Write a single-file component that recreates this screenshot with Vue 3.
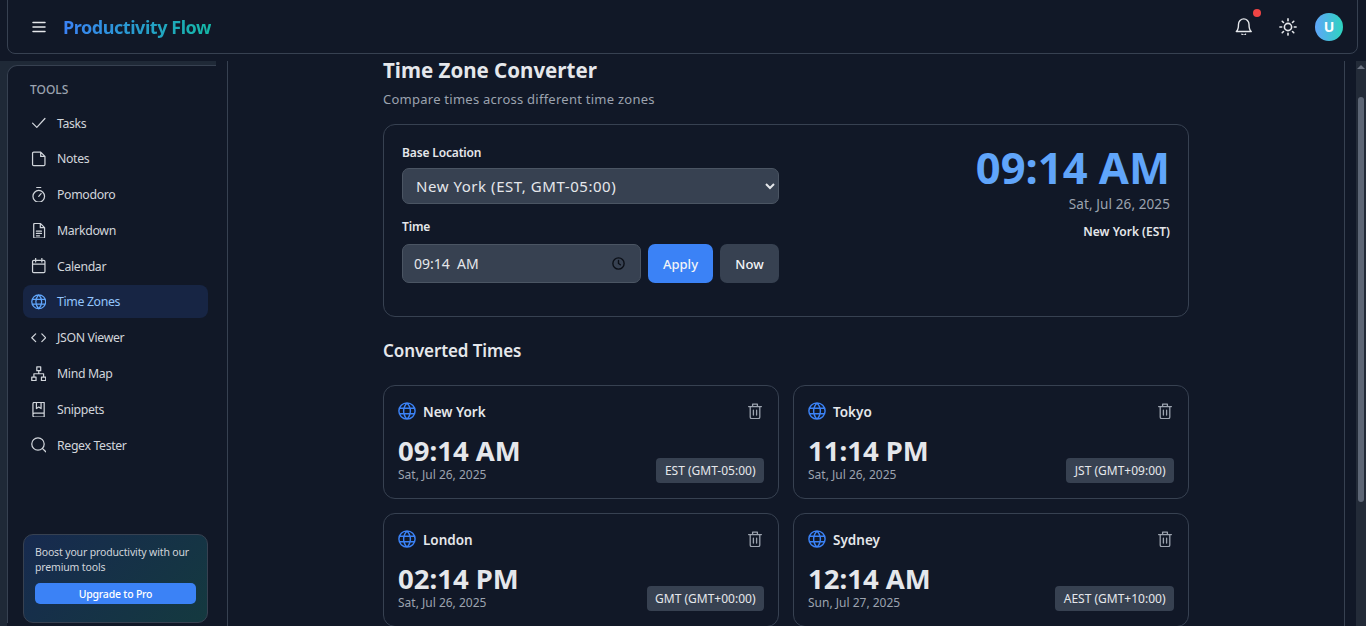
<script setup>
import { ref } from 'vue'

const tools = [
  { name: 'Tasks', icon: 'check' },
  { name: 'Notes', icon: 'note' },
  { name: 'Pomodoro', icon: 'timer' },
  { name: 'Markdown', icon: 'doc' },
  { name: 'Calendar', icon: 'cal' },
  { name: 'Time Zones', icon: 'globe', active: true },
  { name: 'JSON Viewer', icon: 'code' },
  { name: 'Mind Map', icon: 'map' },
  { name: 'Snippets', icon: 'book' },
  { name: 'Regex Tester', icon: 'search' }
]

const icons = {
  check: 'M4 12.5l5.5 5.5L20 6.5',
  note: 'M5.5 3.5h9l5.5 5.5v10.5a1.5 1.5 0 0 1-1.5 1.5h-13A1.5 1.5 0 0 1 4 19.5V5a1.5 1.5 0 0 1 1.5-1.5zM14.5 3.5V9H20',
  timer: 'M9.5 2.5h5M12 14l3-3.5M19.5 14a7.5 7.5 0 1 1-15 0 7.5 7.5 0 0 1 15 0z',
  doc: 'M7 2.5h7l5.5 5.5v12a1.5 1.5 0 0 1-1.5 1.5H7A1.5 1.5 0 0 1 5.5 20V4A1.5 1.5 0 0 1 7 2.5zM14 2.5V8h5.5M9 12.5h6.5M9 15.5h6.5M9 18.5h4',
  cal: 'M5.5 5h13a1.5 1.5 0 0 1 1.5 1.5v13a1.5 1.5 0 0 1-1.5 1.5h-13A1.5 1.5 0 0 1 4 19.5v-13A1.5 1.5 0 0 1 5.5 5zM8 2.5V7M16 2.5V7M4 10h16',
  globe: 'M21 12a9 9 0 1 1-18 0 9 9 0 0 1 18 0zM3.5 9h17M3.5 15h17M12 3c-5 5-5 13 0 18M12 3c5 5 5 13 0 18',
  code: 'M8 7l-5 5 5 5M16 7l5 5-5 5',
  map: 'M9.5 3h5v5h-5zM3 16.5h5.5v4.5H3zM15.5 16.5H21v4.5h-5.5zM12 8v4M5.75 16.5V12h12.5v4.5',
  book: 'M6.5 2.5H19v19H6.5a2 2 0 0 1-2-2v-15a2 2 0 0 1 2-2zM4.5 18a2 2 0 0 1 2-1.5H19M9 2.5v8l3-2 3 2v-8',
  search: 'M19 11a8 8 0 1 1-16 0 8 8 0 0 1 16 0zM21 21l-4.3-4.3',
  trash: 'M4 6.5h16M9 6V3.5h6V6M6 6.5h12v13a2 2 0 0 1-2 2H8a2 2 0 0 1-2-2zM10 11v6M14 11v6'
}

const cards = [
  { city: 'New York', time: '09:14 AM', date: 'Sat, Jul 26, 2025', zone: 'EST (GMT-05:00)' },
  { city: 'Tokyo', time: '11:14 PM', date: 'Sat, Jul 26, 2025', zone: 'JST (GMT+09:00)' },
  { city: 'London', time: '02:14 PM', date: 'Sat, Jul 26, 2025', zone: 'GMT (GMT+00:00)' },
  { city: 'Sydney', time: '12:14 AM', date: 'Sun, Jul 27, 2025', zone: 'AEST (GMT+10:00)' }
]

const base = ref('ny')
</script>

<template>
  <div class="app">
    <header class="topbar">
      <div class="brand">
        <svg class="menu" viewBox="0 0 24 24" fill="none" stroke="currentColor" stroke-width="2" stroke-linecap="round"><path d="M4 6h16M4 12h16M4 18h16" /></svg>
        <span class="logo">Productivity Flow</span>
      </div>
      <div class="actions">
        <span class="bell">
          <svg viewBox="2 2 20 20" fill="none" stroke="currentColor" stroke-width="1.6" stroke-linecap="round" stroke-linejoin="round"><path d="M6 9a6 6 0 0 1 12 0c0 5 1 7 2.5 8.500h-17C5 16 6 14 6 9zM10 20.5a2.2 2.2 0 0 0 4 0" /></svg>
          <i class="dot"></i>
        </span>
        <svg class="sun" viewBox="2 2 20 20" fill="none" stroke="currentColor" stroke-width="1.8" stroke-linecap="round"><circle cx="12" cy="12" r="4" /><path d="M12 3v2M12 19v2M3 12h2M19 12h2M5.6 5.6L7 7M17 17l1.4 1.4M5.6 18.4L7 17M17 7l1.4-1.4" /></svg>
        <span class="avatar">U</span>
      </div>
    </header>

    <div class="body">
      <div class="side-wrap">
        <aside class="sidebar">
          <div class="tools-title">TOOLS</div>
          <nav class="nav">
            <a v-for="t in tools" :key="t.name" class="nav-item" :class="{ active: t.active }">
              <svg viewBox="2 2 20 20" fill="none" stroke="currentColor" stroke-width="1.6" stroke-linecap="round" stroke-linejoin="round"><path :d="icons[t.icon]" /></svg>
              <span>{{ t.name }}</span>
            </a>
          </nav>
          <div class="promo">
            <p>Boost your productivity with our premium tools</p>
            <button class="upgrade">Upgrade to Pro</button>
          </div>
        </aside>
      </div>

      <main class="main">
        <div class="scroll-area">
          <div class="content">
            <h1>Time Zone Converter</h1>
            <p class="sub">Compare times across different time zones</p>

            <section class="panel">
              <div class="form">
                <label>Base Location</label>
                <select v-model="base" class="select">
                  <option value="ny">New York (EST, GMT-05:00)</option>
                </select>
                <label class="time-label">Time</label>
                <div class="time-row">
                  <div class="time-input">
                    <span>09:14&nbsp; AM</span>
                    <svg viewBox="0 0 24 24" fill="none" stroke="#0b0f17" stroke-width="2.2" stroke-linecap="round"><circle cx="12" cy="12" r="9" /><path d="M12 7v5l3 2" /></svg>
                  </div>
                  <button class="apply">Apply</button>
                  <button class="now">Now</button>
                </div>
              </div>
              <div class="clock">
                <div class="big">09:14 AM</div>
                <div class="big-date">Sat, Jul 26, 2025</div>
                <div class="big-city">New York (EST)</div>
              </div>
            </section>

            <h2>Converted Times</h2>

            <div class="grid">
              <article v-for="c in cards" :key="c.city" class="card">
                <div class="card-top">
                  <div class="city">
                    <svg viewBox="2 2 20 20" fill="none" stroke="#3b82f6" stroke-width="1.6" stroke-linecap="round"><path :d="icons.globe" /></svg>
                    <span>{{ c.city }}</span>
                  </div>
                  <svg class="trash" viewBox="2 2 20 20" fill="none" stroke="currentColor" stroke-width="1.6" stroke-linecap="round" stroke-linejoin="round"><path :d="icons.trash" /></svg>
                </div>
                <div class="card-bottom">
                  <div>
                    <div class="card-time">{{ c.time }}</div>
                    <div class="card-date">{{ c.date }}</div>
                  </div>
                  <span class="zone">{{ c.zone }}</span>
                </div>
              </article>
            </div>
          </div>
        </div>
        <div class="scrollbar">
          <span class="arrow"></span>
          <span class="thumb"></span>
        </div>
      </main>
    </div>
  </div>
</template>

<style>
html, body {
  margin: 0;
  height: 100%;
  overflow: hidden;
  background: #111827;
}
</style>

<style scoped>
.app {
  height: 626px;
  display: flex;
  flex-direction: column;
  overflow: hidden;
  background: #111827;
  color: #e5e7eb;
  font-family: "Noto Sans", "Open Sans", sans-serif;
}

.topbar {
  flex: none;
  height: 55px;
  margin: -1px 8px 0 7px;
  padding: 0 14px 0 22px;
  box-sizing: border-box;
  display: flex;
  align-items: center;
  justify-content: space-between;
  border: 1px solid #374151;
  border-radius: 0 0 8px 8px;
}

.brand {
  display: flex;
  align-items: center;
  gap: 15px;
}

.menu {
  width: 18px;
  height: 18px;
  color: #e5e7eb;
}

.logo {
  font-size: 18px;
  font-weight: 700;
  letter-spacing: -0.45px;
  background: linear-gradient(90deg, #3b82f6, #14b8a6);
  -webkit-background-clip: text;
  background-clip: text;
  color: transparent;
}

.actions {
  display: flex;
  align-items: center;
  gap: 18px;
}

.bell {
  position: relative;
  width: 20px;
  height: 20px;
  margin-right: 7px;
  display: flex;
  align-items: center;
  justify-content: center;
}

.bell svg {
  display: block;
  width: 17.5px;
  height: 17.5px;
  color: #e5e7eb;
}

.sun {
  display: block;
  width: 18px;
  height: 18px;
  color: #e5e7eb;
}

.dot {
  position: absolute;
  top: -8px;
  right: -7px;
  width: 8px;
  height: 8px;
  border-radius: 50%;
  background: #ef4444;
}

.avatar {
  width: 28px;
  height: 28px;
  border-radius: 50%;
  display: flex;
  align-items: center;
  justify-content: center;
  background: linear-gradient(90deg, #60a5fa, #2dd4bf);
  color: #fff;
  font-size: 14px;
  font-weight: 700;
}

.body {
  flex: 1;
  min-height: 0;
  display: flex;
  margin-top: 7px;
}

.side-wrap {
  flex: none;
  width: 228px;
  box-sizing: border-box;
  border-right: 1px solid #374151;
  background: linear-gradient(#1f2937, #1f2937) no-repeat 0 0 / 216px 14px, linear-gradient(#1f2937, #1f2937) no-repeat 0 0 / 7px 100%;
  padding: 4px 11px 3px 7px;
  display: flex;
}

.sidebar {
  flex: 1;
  box-sizing: border-box;
  padding: 15px 0 0 15px;
  background: #111827;
  border-top: 1px solid #374151;
  border-left: 1px solid #374151;
  border-radius: 10px 0 0 0;
  display: flex;
  flex-direction: column;
}

.tools-title {
  padding-left: 7px;
  font-size: 12px;
  font-weight: 500;
  color: #9ca3af;
  line-height: 18px;
  margin-bottom: 7.5px;
}

.nav {
  display: flex;
  flex-direction: column;
  gap: 2.8px;
  margin-right: 8px;
}

.nav-item {
  height: 33px;
  display: flex;
  align-items: center;
  gap: 11px;
  padding-left: 7.5px;
  border-radius: 8px;
  font-size: 12.3px;
  letter-spacing: -0.35px;
  color: #d1d5db;
}

.nav-item svg {
  width: 15.5px;
  height: 15.5px;
  flex: none;
}

.nav-item.active {
  background: #172544;
  color: #93c5fd;
}

.nav-item.active svg {
  color: #60a5fa;
}

.promo {
  margin: auto 8px 0 0;
  box-sizing: border-box;
  height: 89px;
  padding: 10px 11px;
  border: 1px solid #374151;
  border-radius: 10px;
  background: linear-gradient(135deg, #172a4f, #14393f);
}

.promo p {
  margin: 0 0 8px;
  font-size: 10.5px;
  letter-spacing: -0.15px;
  line-height: 15px;
  color: #d1d5db;
}

.upgrade {
  display: block;
  width: 100%;
  height: 21px;
  padding: 0;
  border: 0;
  border-radius: 5px;
  background: #3b82f6;
  color: #fff;
  font: 500 10.5px "Noto Sans", sans-serif;
  letter-spacing: -0.2px;
}

.main {
  flex: 1;
  min-width: 0;
  display: flex;
}

.scroll-area {
  flex: 1;
  min-width: 0;
  margin-right: 11px;
  border-right: 1px solid #374151;
}

.content {
  width: 806px;
  margin-left: 155px;
}

h1 {
  margin: 0;
  font-size: 20.5px;
  line-height: 18px;
  font-weight: 700;
  color: #e5e7eb;
}

.sub {
  margin: 11px 0 0;
  font-size: 13px;
  letter-spacing: 0.25px;
  line-height: 18px;
  color: #9ca3af;
}

.panel {
  margin-top: 16px;
  height: 193px;
  box-sizing: border-box;
  padding: 19px 18px 18px;
  border: 1px solid #374151;
  border-radius: 12px;
  display: flex;
  justify-content: space-between;
}

.form {
  width: 377px;
}

label {
  display: block;
  font-size: 12px;
  letter-spacing: -0.15px;
  line-height: 18px;
  font-weight: 600;
  color: #e5e7eb;
}

.select {
  display: block;
  width: 100%;
  height: 36px;
  margin-top: 6px;
  padding: 0 9px;
  border: 1px solid #4b5563;
  border-radius: 7px;
  background: #374151;
  color: #e5e7eb;
  font: 15px "Noto Sans", sans-serif;
  letter-spacing: 0.55px;
}

.time-label {
  margin-top: 14px;
}

.time-row {
  display: flex;
  gap: 7px;
  margin-top: 8px;
}

.time-input {
  flex: 1;
  height: 39px;
  box-sizing: border-box;
  padding: 0 14px 0 11px;
  display: flex;
  align-items: center;
  justify-content: space-between;
  border: 1px solid #4b5563;
  border-radius: 7px;
  background: #374151;
  font-size: 14px;
}

.time-input svg {
  width: 15px;
  height: 15px;
}

.apply,
.now {
  height: 39px;
  border: 0;
  border-radius: 7px;
  color: #f3f4f6;
  font: 500 13px "Noto Sans", sans-serif;
}

.apply {
  width: 65px;
  background: #3b82f6;
}

.now {
  width: 59px;
  background: #374151;
}

.clock {
  text-align: right;
}

.big {
  font-size: 43.5px;
  line-height: 46px;
  font-weight: 700;
  color: #60a5fa;
}

.big-date {
  margin-top: 5px;
  font-size: 13.5px;
  letter-spacing: 0.1px;
  line-height: 18px;
  color: #9ca3af;
}

.big-city {
  margin-top: 10px;
  font-size: 12px;
  line-height: 18px;
  font-weight: 600;
  color: #e5e7eb;
}

h2 {
  margin: 24px 0 0;
  font-size: 17px;
  letter-spacing: -0.1px;
  line-height: 20px;
  font-weight: 600;
  color: #e5e7eb;
}

.grid {
  margin-top: 24px;
  display: grid;
  grid-template-columns: 1fr 1fr;
  gap: 14px;
}

.card {
  height: 114px;
  box-sizing: border-box;
  padding: 15px 14px 0 14px;
  border: 1px solid #374151;
  border-radius: 12px;
}

.card-top {
  height: 20px;
  display: flex;
  align-items: center;
  justify-content: space-between;
}

.city {
  display: flex;
  align-items: center;
  gap: 7px;
  font-size: 13.5px;
  font-weight: 600;
}

.city svg {
  width: 18px;
  height: 18px;
}

.city span {
  padding-top: 1px;
}

.trash {
  width: 16px;
  height: 16px;
  margin-right: 1px;
  color: #9ca3af;
}

.card-bottom {
  display: flex;
  justify-content: space-between;
  align-items: flex-end;
  margin-top: 14px;
}

.card-time {
  font-size: 27.5px;
  line-height: 32px;
  font-weight: 700;
  color: #e5e7eb;
}

.card-date {
  font-size: 12px;
  line-height: 16px;
  color: #9ca3af;
}

.zone {
  padding: 4px 8.5px;
  border-radius: 4px;
  background: #374151;
  font-size: 12px;
  line-height: 17px;
  color: #e5e7eb;
}

.scrollbar {
  flex: none;
  width: 10px;
  background: #232b38;
  display: flex;
  flex-direction: column;
  align-items: center;
}

.arrow {
  margin-top: 4px;
  border: 4px solid transparent;
  border-top: 0;
  border-bottom: 4px solid #6b7280;
}

.thumb {
  margin-top: 28px;
  width: 6px;
  height: 405px;
  border-radius: 3px;
  background: #5d6675;
}
</style>
